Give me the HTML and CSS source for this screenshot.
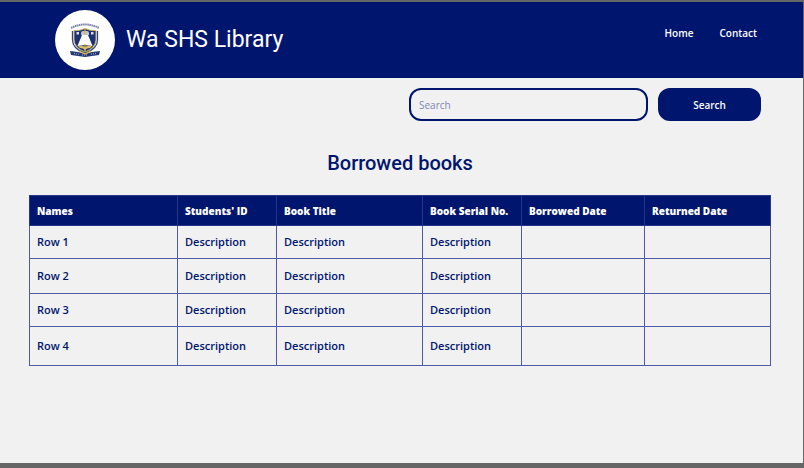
FILE: index.html
```html
<!DOCTYPE html>
<html lang="en">
<head>
<meta charset="utf-8">
<meta name="viewport" content="width=device-width, initial-scale=1">
<title>Wa SHS Library</title>
<link rel="stylesheet" href="styles.css">
</head>
<body>
<header class="site-header">
  <div class="brand">
    <span class="brand-badge">
      <svg class="crest" viewBox="0 0 38 40" aria-hidden="true">
        <path d="M5 8Q19 1 33 8" fill="none" stroke="#7b84a8" stroke-width="2" stroke-dasharray="1.6 .5"/>
        <path d="M8 10.500Q14 11 19 8.500Q24 11 30 10.500V20Q29.500 28 19 32Q8.500 28 8 20Z" fill="#1c3277" stroke="#d2b65b" stroke-width="1"/>
        <path d="M6.500 11V20Q6.500 29 19 33Q31.500 29 31.500 20V11" fill="none" stroke="#344784" stroke-width="1.300"/>
        <path d="M10.500 12h2.500v2.500h-2.500zM25 12h2.500v2.500h-2.500z" fill="#d7dceb"/>
        <path d="M15 13q0-2 2-2h4q2 0 2 2v2h-8z" fill="#c5c6cf"/>
        <path d="M16 15h6l4.500 11-7.500-1-7.500 1z" fill="#fff"/>
        <path d="M19 9v5M19 24v7" stroke="#d5b03c" stroke-width="1.200"/>
        <path d="M12 26q4-1 7 1q3-2 7-1l-2 2q-3 0-5 2q-2-2-5-2z" fill="#d9bf62"/>
        <path d="M4 31l8 1 7 2 7-2 8-1-1 4-7 1-7 1-7-1-7-1z" fill="#243875"/>
        <path d="M8 33.500l5 .7M25 34.200l5-.7M16 35h6" stroke="#aeb9d7" stroke-width="1" stroke-dasharray="1 1"/>
        <path d="M13 31l6 3 6-3" fill="none" stroke="#d5b03c" stroke-width="1.200"/>
      </svg>
    </span>
    <span class="brand-name">Wa SHS Library</span>
  </div>
  <nav class="site-nav" aria-label="Main">
    <a href="#home">Home</a>
    <a href="#contact">Contact</a>
  </nav>
</header>
<main>
  <form class="search" role="search">
    <input class="search-input" type="search" placeholder="Search" aria-label="Search">
    <button class="search-button" type="submit">Search</button>
  </form>
  <h1 class="title" id="table-title">Borrowed books</h1>
  <div class="table-wrap">
    <table class="books" aria-labelledby="table-title">
      <colgroup>
        <col class="col-name"><col class="col-code"><col class="col-title"><col class="col-code"><col class="col-date"><col>
      </colgroup>
      <thead>
        <tr><th>Names</th><th>Students' ID</th><th>Book Title</th><th>Book Serial No.</th><th>Borrowed Date</th><th>Returned Date</th></tr>
      </thead>
      <tbody>
        <tr><td>Row 1</td><td>Description</td><td>Description</td><td>Description</td><td></td><td></td></tr>
        <tr class="row-medium"><td>Row 2</td><td>Description</td><td>Description</td><td>Description</td><td></td><td></td></tr>
        <tr><td>Row 3</td><td>Description</td><td>Description</td><td>Description</td><td></td><td></td></tr>
        <tr class="row-tall"><td>Row 4</td><td>Description</td><td>Description</td><td>Description</td><td></td><td></td></tr>
      </tbody>
    </table>
  </div>
</main>
</body>
</html>
```
FILE: styles.css
```css
:root {
  --navy: #00156d;
  --page: #f1f1f1;
  --frame: #666;
}
* { box-sizing: border-box; }
body {
  margin: 0;
  min-height: 100vh;
  background: var(--page);
  border: solid var(--frame);
  border-width: 2px 1px 5px 0;
  color: var(--navy);
  font-family: "Open Sans", sans-serif;
  font-size: 10px;
  font-weight: 600;
}
.site-header {
  display: flex;
  justify-content: space-between;
  align-items: flex-start;
  padding: 8px 46px 8px 55px;
  background: var(--navy);
  color: #fff;
}
.brand {
  display: flex;
  align-items: center;
  gap: 11px;
}
.brand-badge {
  display: grid;
  place-items: center;
  width: 60px;
  height: 60px;
  border-radius: 50%;
  background: #fff;
}
.crest {
  width: 38px;
  height: 40px;
}
.brand-name {
  font: 400 23px/28px Roboto, sans-serif;
}
.site-nav {
  display: flex;
  gap: 26px;
  padding-top: 16px;
  line-height: 14px;
}
.site-nav a {
  color: inherit;
  text-decoration: none;
}
.search {
  display: flex;
  justify-content: flex-end;
  gap: 10px;
  padding: 10px 42px 0 10px;
}
.search-input,
.search-button {
  height: 33px;
  border: 2px solid var(--navy);
  border-radius: 12px;
  font: inherit;
}
.search-input {
  width: 239px;
  padding: 0 8px;
  background: transparent;
  color: var(--navy);
  font-weight: 400;
  appearance: none;
}
.search-input::placeholder {
  color: #8088b2;
}
.search-button {
  width: 103px;
  background: var(--navy);
  color: #fff;
}
.title {
  margin: 30px 0 20px;
  padding-right: 3px;
  font: 500 20px/24px Roboto, sans-serif;
  text-align: center;
}
.table-wrap {
  padding: 0 32px 0 29px;
}
.books {
  width: 100%;
  table-layout: fixed;
  border-collapse: collapse;
  line-height: 14px;
}
.col-name { width: 148px; }
.col-code { width: 99px; }
.col-title { width: 146px; }
.col-date { width: 123px; }
.books th,
.books td {
  height: 33px;
  padding: 0 7px;
  border: 1px solid #4c5ba8;
  text-align: left;
}
.books td {
  font-size: 11px;
}
.books th {
  height: 30px;
  background: var(--navy);
  border-color: #22378a;
  color: #fff;
  font-weight: 800;
}
.books .row-medium td { height: 35px; }
.books .row-tall td { height: 39px; }
```
